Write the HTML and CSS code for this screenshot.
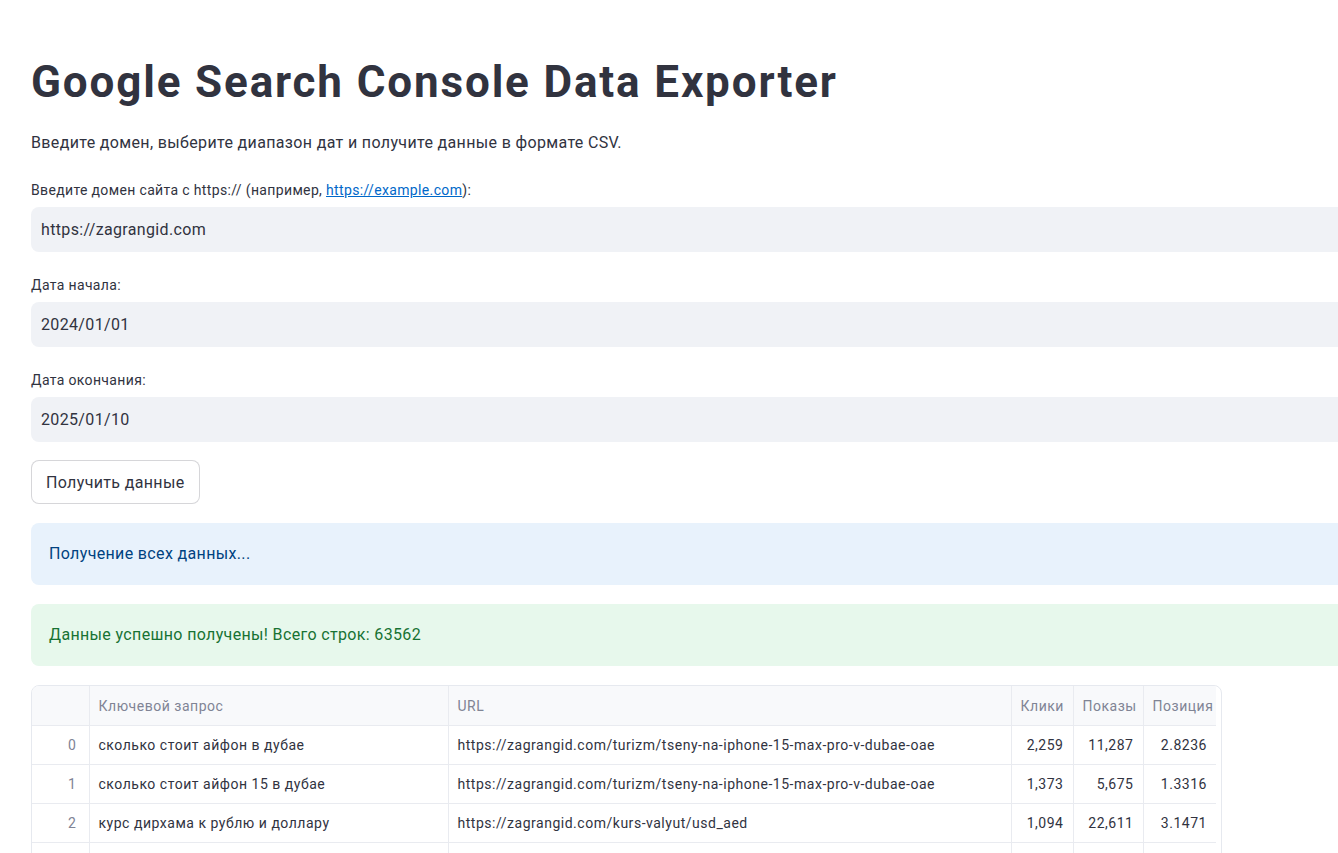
FILE: index.html
```html
<!DOCTYPE html>
<html lang="ru">
<head>
<meta charset="utf-8">
<title>Google Search Console Data Exporter</title>
<link rel="stylesheet" href="styles.css">
</head>
<body>
<main class="main">
  <h1 class="title">Google Search Console Data Exporter</h1>
  <p class="intro">Введите домен, выберите диапазон дат и получите данные в формате CSV.</p>

  <div class="field">
    <label class="label">Введите домен сайта с https:// (например, <a href="#" class="link">https://example.com</a>):</label>
    <div class="input">https://zagrangid.com</div>
  </div>

  <div class="field">
    <label class="label">Дата начала:</label>
    <div class="input">2024/01/01</div>
  </div>

  <div class="field">
    <label class="label">Дата окончания:</label>
    <div class="input">2025/01/10</div>
  </div>

  <button class="btn">Получить данные</button>

  <div class="alert alert-info">Получение всех данных...</div>
  <div class="alert alert-success">Данные успешно получены! Всего строк: 63562</div>

  <div class="frame">
    <table class="grid">
      <colgroup>
        <col class="c-idx"><col class="c-q"><col class="c-url"><col class="c-cl"><col class="c-sh"><col class="c-pos">
      </colgroup>
      <thead>
        <tr><th></th><th>Ключевой запрос</th><th>URL</th><th class="num">Клики</th><th class="num">Показы</th><th class="num">Позиция</th></tr>
      </thead>
      <tbody>
        <tr><td class="idx">0</td><td>сколько стоит айфон в дубае</td><td>https://zagrangid.com/turizm/tseny-na-iphone-15-max-pro-v-dubae-oae</td><td class="num">2,259</td><td class="num">11,287</td><td class="num">2.8236</td></tr>
        <tr><td class="idx">1</td><td>сколько стоит айфон 15 в дубае</td><td>https://zagrangid.com/turizm/tseny-na-iphone-15-max-pro-v-dubae-oae</td><td class="num">1,373</td><td class="num">5,675</td><td class="num">1.3316</td></tr>
        <tr><td class="idx">2</td><td>курс дирхама к рублю и доллару</td><td>https://zagrangid.com/kurs-valyut/usd_aed</td><td class="num">1,094</td><td class="num">22,611</td><td class="num">3.1471</td></tr>
        <tr class="partial"><td class="idx"></td><td></td><td></td><td class="num"></td><td class="num"></td><td class="num"></td></tr>
      </tbody>
    </table>
  </div>
</main>
</body>
</html>
```

FILE: styles.css
```css
html, body {
  margin: 0;
  padding: 0;
  overflow: hidden;
  background: #ffffff;
}

body {
  font-family: Roboto, "Noto Sans", "Liberation Sans", sans-serif;
  color: #31333f;
  letter-spacing: 0.35px;
}

.main {
  width: 1420px;
  padding: 56px 0 0 31px;
  box-sizing: border-box;
}

.title {
  margin: 0;
  font-size: 44px;
  line-height: 53px;
  font-weight: 700;
  color: #31333f;
  letter-spacing: 1.85px;
}

.intro {
  margin: 22px 0 0;
  font-size: 16px;
  line-height: 24px;
}

.field {
  margin-top: 25px;
}

.field + .field {
  margin-top: 23px;
}

.label {
  display: block;
  font-size: 14px;
  line-height: 20px;
  height: 20px;
  margin-bottom: 7px;
}

.link {
  color: #0068c9;
  text-decoration: underline;
}

.input {
  height: 45px;
  background: #f0f2f6;
  border-radius: 8px;
  padding-left: 10px;
  font-size: 16px;
  line-height: 45px;
  color: #31333f;
}

.btn {
  display: block;
  margin-top: 18px;
  height: 44px;
  padding: 0 14px;
  background: #ffffff;
  border: 1px solid rgba(49, 51, 63, 0.2);
  border-radius: 8px;
  font-family: inherit;
  font-size: 16px;
  letter-spacing: 0.35px;
  color: #31333f;
}

.alert {
  height: 62px;
  border-radius: 8px;
  padding: 0 18px;
  font-size: 16px;
  line-height: 62px;
}

.alert-info {
  margin-top: 19px;
  background: #e8f2fc;
  color: #004280;
}

.alert-success {
  margin-top: 19px;
  background: #e7f8ec;
  color: #177233;
}

.frame {
  margin-top: 19px;
  width: 1191px;
  height: 200px;
  box-sizing: border-box;
  border: 1px solid #e6e9ef;
  border-radius: 8px;
  overflow: hidden;
}

.grid {
  border-collapse: collapse;
  table-layout: fixed;
  width: 1184px;
  font-size: 14px;
  letter-spacing: 0.52px;
}

.c-idx { width: 57px; }
.c-q { width: 359px; }
.c-url { width: 563px; }
.c-cl { width: 62px; }
.c-sh { width: 70px; }
.c-pos { width: 73px; }

.grid th, .grid td {
  border-right: 1px solid #e9ebf0;
  border-bottom: 1px solid #e9ebf0;
  padding: 0 8px 0 9px;
  text-align: left;
  white-space: nowrap;
  overflow: hidden;
}

.grid th:last-child, .grid td:last-child {
  border-right: none;
}

.grid th {
  height: 39px;
  background: #f8f9fb;
  color: #808495;
  font-weight: 400;
}

.grid td {
  height: 38px;
  color: #31333f;
}

.grid .num {
  text-align: right;
  padding-right: 9px;
}

.grid .idx {
  text-align: right;
  color: #808495;
  padding-right: 12px;
}
```
